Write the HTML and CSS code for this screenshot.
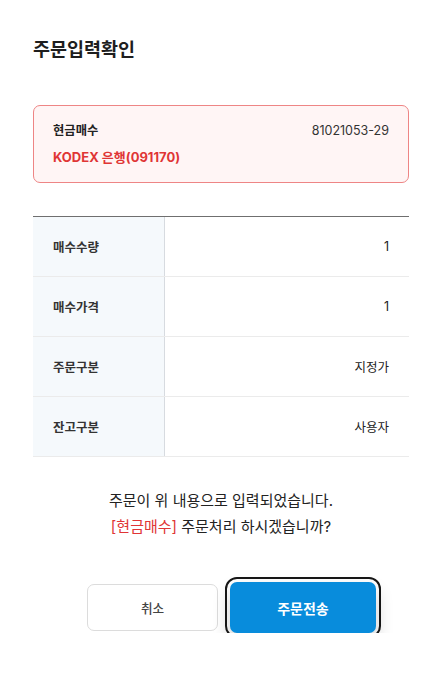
FILE: index.html
```html
<!DOCTYPE html>
<html lang="ko">
<head>
<meta charset="utf-8">
<title>주문입력확인</title>
<link rel="stylesheet" href="styles.css">
</head>
<body>
<div class="page">
  <h1 class="title">주문입력확인</h1>

  <div class="summary">
    <div class="summary-row">
      <span class="summary-type">현금매수</span>
      <span class="summary-acct">81021053-29</span>
    </div>
    <div class="summary-name">KODEX 은행(091170)</div>
  </div>

  <div class="table">
    <div class="row">
      <div class="th">매수수량</div>
      <div class="td">1</div>
    </div>
    <div class="row">
      <div class="th">매수가격</div>
      <div class="td">1</div>
    </div>
    <div class="row">
      <div class="th">주문구분</div>
      <div class="td">지정가</div>
    </div>
    <div class="row">
      <div class="th">잔고구분</div>
      <div class="td">사용자</div>
    </div>
  </div>

  <p class="message">주문이 위 내용으로 입력되었습니다.<br><span class="hl">[현금매수]</span> 주문처리 하시겠습니까?</p>

  <div class="actions">
    <button class="btn btn-cancel" type="button">취소</button>
    <button class="btn btn-submit" type="button">주문전송</button>
  </div>
</div>
</body>
</html>
```

FILE: styles.css
```css
html, body {
  margin: 0;
  padding: 0;
  background: #fff;
}
body {
  font-family: "Inter", "Noto Sans CJK KR", sans-serif;
  color: #222;
}
.page {
  padding: 36px 33px 0 33px;
}
.title {
  margin: 0;
  font-size: 18.5px;
  line-height: 26px;
  font-weight: 700;
  color: #1e1e1e;
  letter-spacing: 0;
}
.summary {
  margin-top: 43px;
  height: 78px;
  box-sizing: border-box;
  border: 1px solid #ee8585;
  border-radius: 7px;
  background: #fff5f5;
  padding: 16px 19px 0 19px;
}
.summary-row {
  display: flex;
  justify-content: space-between;
  align-items: center;
  line-height: 18px;
}
.summary-type {
  font-size: 12.3px;
  font-weight: 600;
  color: #222;
}
.summary-acct {
  font-size: 12.5px;
  color: #333;
}
.summary-name {
  margin-top: 8px;
  line-height: 18px;
  font-size: 13px;
  font-weight: 700;
  color: #e03535;
}
.table {
  margin-top: 33px;
  border-top: 1px solid #6f6f6f;
}
.row {
  display: flex;
  height: 60px;
  box-sizing: border-box;
  border-bottom: 1px solid #ebebeb;
}
.th {
  width: 132px;
  flex: none;
  box-sizing: border-box;
  background: #f5f9fc;
  border-right: 1px solid #d7dbe0;
  padding-left: 20px;
  display: flex;
  align-items: center;
  font-size: 12.5px;
  font-weight: 600;
  color: #333;
}
.td {
  flex: 1;
  display: flex;
  align-items: center;
  justify-content: flex-end;
  padding-right: 20px;
  font-size: 12.5px;
  font-weight: 400;
  color: #222;
}
.message {
  margin: 31px 0 0 0;
  text-align: center;
  font-size: 15px;
  line-height: 26px;
  color: #222;
}
.hl {
  color: #e03535;
}
.actions {
  margin-top: 42px;
  display: flex;
  align-items: center;
  gap: 12px;
  padding-left: 54px;
}
.btn {
  font-family: "Inter", "Noto Sans CJK KR", sans-serif;
  margin: 0;
  cursor: pointer;
  box-sizing: border-box;
}
.btn-cancel {
  width: 131px;
  height: 47px;
  border: 1px solid #dcdcdc;
  border-radius: 7px;
  background: #fff;
  color: #444;
  font-size: 12.6px;
  font-weight: 500;
}
.btn-submit {
  width: 146px;
  height: 51px;
  border: none;
  border-radius: 7px;
  background: #088cdc;
  color: #fff;
  font-size: 14px;
  font-weight: 600;
  outline: 2px solid #161616;
  outline-offset: 3px;
  box-shadow: 0 9px 18px rgba(0, 0, 0, 0.2);
}
```
